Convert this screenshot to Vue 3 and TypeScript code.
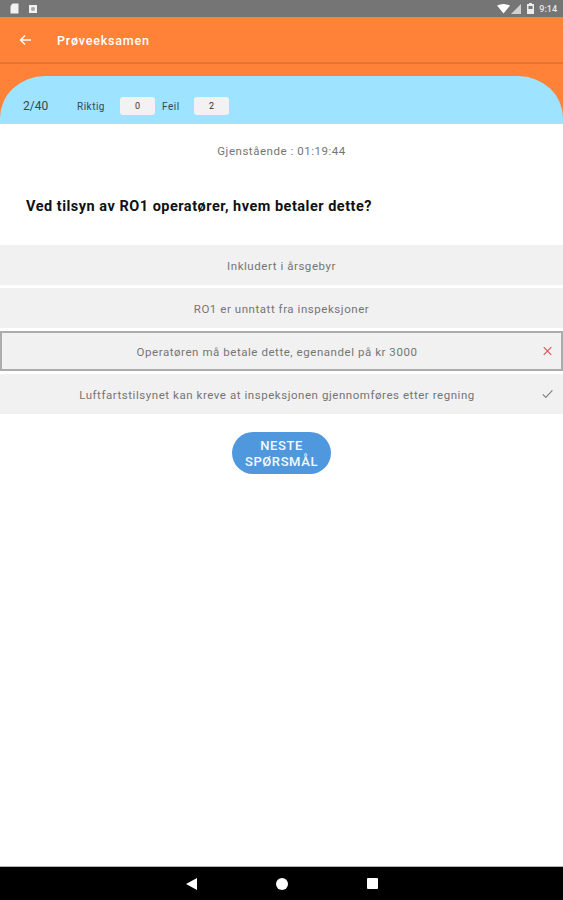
<template>
  <div class="screen">
    <div class="status-bar">
      <div class="status-left">
        <svg width="9" height="11" viewBox="0 0 9 11"><path d="M2.5 0.5H8.5V10.5H0.5V3Z" fill="#f2f2f2" /></svg>
        <svg width="8" height="8" viewBox="0 0 8 8"><path fill-rule="evenodd" d="M0 0H8V8H0ZM2.5 2.5V5.5H5.5V2.5Z" fill="#f2f2f2" /><rect x="3" y="3" width="2" height="2" fill="#aaa" /></svg>
      </div>
      <div class="status-right">
        <svg width="13" height="10" viewBox="0 0 13 10"><path d="M0 1.5Q6.5 -1.5 13 1.5L6.5 9.5Z" fill="#fff" /></svg>
        <svg class="signal" width="10" height="10" viewBox="0 0 10 10"><path d="M10 0V10H0Z" fill="#d0d0d0" /></svg>
        <svg class="battery" width="7" height="11" viewBox="0 0 7 11"><path fill-rule="evenodd" d="M2 0H5V1H7V11H0V1H2ZM1.5 3V6H5.5V3Z" fill="#ececec" /></svg>
        <span class="clock">9:14</span>
      </div>
    </div>

    <header class="app-bar">
      <svg class="back" width="12" height="12" viewBox="0 0 12 12" fill="none" stroke="#fff" stroke-width="1.4">
        <path d="M12 6H1.5M6 1.5L1.5 6L6 10.5" />
      </svg>
      <span class="app-title">Prøveeksamen</span>
    </header>

    <div class="score-wrap">
      <div class="score-panel">
        <span class="counter">{{ progress }}</span>
        <span class="score-label first">Riktig</span>
        <span class="score-box">{{ correct }}</span>
        <span class="score-label second">Feil</span>
        <span class="score-box">{{ wrong }}</span>
      </div>
    </div>

    <main class="content">
      <p class="timer">Gjenstående : {{ remaining }}</p>
      <h1 class="question">{{ question }}</h1>

      <ul class="options">
        <li
          v-for="option in options"
          :key="option.text"
          class="option"
          :class="{ selected: option.state === 'wrong', marked: option.state }"
        >
          <span>{{ option.text }}</span>
          <svg v-if="option.state === 'wrong'" class="mark" width="9" height="9" viewBox="0 0 9 9" fill="none" stroke="#e0545a" stroke-width="1.2">
            <path d="M0.7 0.7L8.3 8.3M8.3 0.7L0.7 8.3" />
          </svg>
          <svg v-else-if="option.state === 'right'" class="mark" width="11" height="9" viewBox="0 0 11 9" fill="none" stroke="#7d857d" stroke-width="1.2">
            <path d="M0.8 4.8L3.8 7.8L10.4 0.8" />
          </svg>
        </li>
      </ul>

      <div class="actions">
        <button class="next" type="button">NESTE<br />SPØRSMÅL</button>
      </div>
    </main>

    <nav class="nav-bar">
      <svg width="11" height="12" viewBox="0 0 11 12"><path d="M11 0V12L0 6Z" fill="#fff" /></svg>
      <svg width="12" height="12" viewBox="0 0 12 12"><circle cx="6" cy="6" r="6" fill="#fff" /></svg>
      <svg width="11" height="11" viewBox="0 0 11 11"><rect width="11" height="11" rx="1" fill="#fff" /></svg>
    </nav>
  </div>
</template>

<script setup lang="ts">
interface Option {
  text: string;
  state?: 'wrong' | 'right';
}

const progress = '2/40';
const correct = 0;
const wrong = 2;
const remaining = '01:19:44';
const question = 'Ved tilsyn av RO1 operatører, hvem betaler dette?';

const options: Option[] = [
  { text: 'Inkludert i årsgebyr' },
  { text: 'RO1 er unntatt fra inspeksjoner' },
  { text: 'Operatøren må betale dette, egenandel på kr 3000', state: 'wrong' },
  { text: 'Luftfartstilsynet kan kreve at inspeksjonen gjennomføres etter regning', state: 'right' }
];
</script>

<style>
html,
body {
  margin: 0;
  background: #fff;
}
</style>

<style scoped>
.screen {
  display: flex;
  flex-direction: column;
  height: 900px;
  background: #fff;
  font-family: Roboto, "Liberation Sans", sans-serif;
  overflow: hidden;
}

.status-bar {
  display: flex;
  justify-content: space-between;
  align-items: center;
  height: 17px;
  padding: 0 6px 0 10px;
  background: #757575;
  flex: none;
}

.status-left,
.status-right {
  display: flex;
  align-items: center;
}

.status-left {
  gap: 10px;
}

.signal {
  margin-left: 1px;
}

.battery {
  margin-left: 6px;
}

.clock {
  margin-left: 5px;
  font-size: 9px;
  font-weight: 500;
  color: #e8e8e8;
}

.app-bar {
  display: flex;
  align-items: center;
  height: 45px;
  padding-left: 19px;
  background: #ff8238;
  border-bottom: 2px solid #e8722f;
  flex: none;
}

.app-title {
  margin-left: 26px;
  padding-top: 1px;
  font-size: 12.5px;
  font-weight: 500;
  color: #fff;
  letter-spacing: 0.8px;
}

.score-wrap {
  padding-top: 12px;
  background: #ff8238;
  flex: none;
}

.score-panel {
  display: flex;
  align-items: center;
  height: 48px;
  padding: 12px 0 0 23px;
  box-sizing: border-box;
  background: #9ee3ff;
  border-radius: 45px 45px 0 0 / 42px 42px 0 0;
}

.counter {
  width: 54px;
  font-size: 12px;
  color: #37474f;
}

.score-label {
  font-size: 10px;
  color: #37474f;
  letter-spacing: 0.5px;
}

.score-label.first {
  width: 43px;
}

.score-label.second {
  width: 32px;
}

.score-box {
  width: 35px;
  height: 18px;
  margin-right: 7px;
  border-radius: 3px;
  background: #f2f2f2;
  font-size: 9px;
  line-height: 18px;
  text-align: center;
  color: #333;
}

.content {
  flex: 1;
}

.timer {
  margin: 20px 0 0;
  font-size: 11.5px;
  line-height: 14px;
  text-align: center;
  color: #757575;
  letter-spacing: 0.53px;
}

.question {
  margin: 40px 0 0 26px;
  font-size: 14.5px;
  line-height: 18px;
  font-weight: 700;
  color: #111;
  letter-spacing: 0.5px;
}

.options {
  display: flex;
  flex-direction: column;
  gap: 3px;
  margin: 29px 0 0;
  padding: 0;
  list-style: none;
}

.option {
  position: relative;
  display: flex;
  align-items: center;
  justify-content: center;
  height: 40px;
  padding-top: 1px;
  box-sizing: border-box;
  background: #f1f1f1;
  font-size: 11.5px;
  color: #757575;
  letter-spacing: 0.55px;
}

.option.marked {
  padding-right: 9px;
}

.option.selected {
  border: 2px solid #acacac;
}

.mark {
  position: absolute;
  right: 10px;
  top: 50%;
  transform: translateY(-50%);
}

.selected .mark {
  right: 9px;
}

.actions {
  display: flex;
  justify-content: center;
  margin-top: 18px;
}

.next {
  width: 99px;
  height: 42px;
  padding: 1px 0 0;
  border: 0;
  border-radius: 21px;
  background: #4f98de;
  color: #f4f9ff;
  font-family: inherit;
  font-size: 13px;
  font-weight: 500;
  line-height: 16px;
  letter-spacing: 0.6px;
}

.nav-bar {
  display: flex;
  align-items: center;
  justify-content: center;
  gap: 79px;
  height: 33px;
  background: #000;
  box-shadow: 0 -1px 0 #b5b5b5;
  flex: none;
}
</style>
